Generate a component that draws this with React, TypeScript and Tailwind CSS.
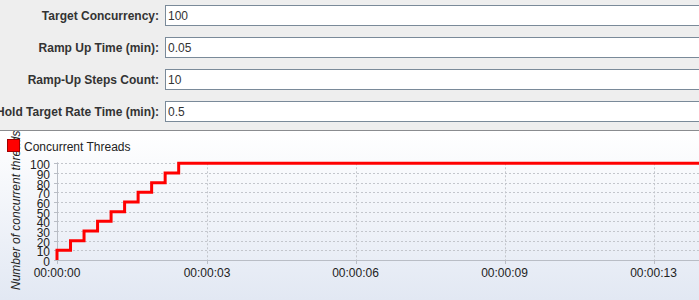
const fields = [
  { label: "Target Concurrency:", value: "100" },
  { label: "Ramp Up Time (min):", value: "0.05" },
  { label: "Ramp-Up Steps Count:", value: "10" },
  { label: "Hold Target Rate Time (min):", value: "0.5" },
];

// chart geometry, in svg coords (origin is just under the panel border)
const X0 = 57;
const Y0 = 129;
const PER10 = 9.67;
const STEP = 13.52;
const yOf = (v: number) => Y0 - (v / 10) * PER10;

const xTicks = [
  { x: 57, label: "00:00:00" },
  { x: 207, label: "00:00:03" },
  { x: 355.5, label: "00:00:06" },
  { x: 504.5, label: "00:00:09" },
  { x: 653.5, label: "00:00:13" },
];

const yTicks = [0, 10, 20, 30, 40, 50, 60, 70, 80, 90, 100];

const buildPath = () => {
  let d = `M${X0},${Y0}`;
  for (let i = 1; i <= 10; i++) {
    const x = X0 + (i - 1) * STEP;
    d += ` L${x},${yOf(i * 10)}`;
    if (i < 10) d += ` L${x + STEP},${yOf(i * 10)}`;
  }
  d += ` L699,${yOf(100)}`;
  return d;
};

const Chart = () => {
  return (
    <div className="h-[170px] border-t border-[#8a8c8f] bg-gradient-to-b from-white to-[#e2e8f3] overflow-hidden">
      <svg width="699" height="169" className="block" style={{ fontFamily: '"Liberation Sans", Arial, sans-serif' }}>
        {/* axis title */}
        <text transform="translate(20,159) rotate(-90)" fontSize="12" fontStyle="italic" fill="#222">
          Number of concurrent threads
        </text>

        {/* legend */}
        <rect x="7.5" y="8.5" width="12" height="12" fill="#ff0000" stroke="#a00000" />
        <text x="24" y="19.5" fontSize="12" fill="#222">Concurrent Threads</text>

        {/* grid */}
        {yTicks.slice(1).map((v) => (
          <line key={v} x1={X0} x2="699" y1={Math.round(yOf(v)) + 0.5} y2={Math.round(yOf(v)) + 0.5} stroke="#c3c6cc" strokeDasharray="2 2" />
        ))}
        {xTicks.slice(1).map((t) => (
          <line key={t.label} x1={Math.round(t.x) + 0.5} x2={Math.round(t.x) + 0.5} y1={yOf(100)} y2={Y0} stroke="#c3c6cc" strokeDasharray="2 2" />
        ))}

        {/* axes */}
        <line x1={X0 + 0.5} x2={X0 + 0.5} y1={yOf(100) - 1} y2={Y0} stroke="#b9bdc5" />
        <line x1={X0} x2="699" y1={Y0 + 0.5} y2={Y0 + 0.5} stroke="#b9bdc5" />

        {yTicks.map((v) => (
          <g key={v}>
            <line x1={X0 - 3} x2={X0} y1={Math.round(yOf(v)) + 0.5} y2={Math.round(yOf(v)) + 0.5} stroke="#b9bdc5" />
            <text x="50" y={yOf(v) + 6} fontSize="12" textAnchor="end" fill="#222">
              {v}
            </text>
          </g>
        ))}

        {xTicks.map((t) => (
          <g key={t.label}>
            <line x1={Math.round(t.x) + 0.5} x2={Math.round(t.x) + 0.5} y1={Y0} y2={Y0 + 4} stroke="#b9bdc5" />
            <text x={t.x} y="146" fontSize="12" textAnchor="middle" fill="#222">
              {t.label}
            </text>
          </g>
        ))}

        {/* series */}
        <path d={buildPath()} fill="none" stroke="#ff0000" strokeWidth="3" strokeLinejoin="miter" />
      </svg>
    </div>
  );
};

const App = () => {
  return (
    <div className="w-[699px] h-[300px] overflow-hidden bg-[#eeeeee] font-['Liberation_Sans',Arial,sans-serif]">
      <div className="flex flex-col gap-[11px] pt-[5px] h-[130px]">
        {fields.map((f) => (
          <div key={f.label} className="flex h-[21px] items-center">
            <div className="w-[159px] shrink-0 flex justify-end">
              <span className="shrink-0 whitespace-nowrap text-[12px] font-bold text-[#333333]">{f.label}</span>
            </div>
            <div className="ml-[6px] flex-1 h-[21px] bg-white border border-r-0 border-[#7a8a99] flex items-center pl-[2px] text-[12px] text-[#333333]">
              {f.value}
            </div>
          </div>
        ))}
      </div>
      <Chart />
    </div>
  );
};

export default App;
